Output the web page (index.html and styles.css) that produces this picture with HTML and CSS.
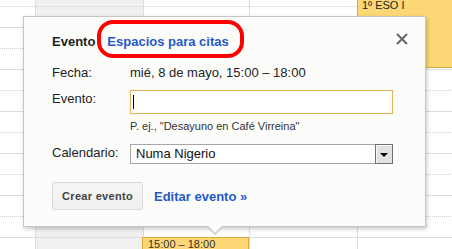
FILE: index.html
```html
<!DOCTYPE html>
<html lang="es">
<head>
<meta charset="utf-8">
<title>Evento</title>
<link rel="stylesheet" href="styles.css">
</head>
<body>
<div class="cal">
  <div class="col time"></div>
  <div class="col day today"></div>
  <div class="col day narrow"></div>
  <div class="col day"></div>
  <div class="col day last"></div>

  <div class="event ev-top">1º ESO I</div>
  <div class="event ev-bottom">15:00 – 18:00</div>

  <div class="popup">
    <div class="head">
      <span class="title">Evento</span>
      <a class="tab-link" href="#">Espacios para citas</a>
    </div>
    <button class="close" aria-label="Cerrar">
      <svg width="12" height="12" viewBox="0 0 12 12"><path d="M1 1 L11 11 M11 1 L1 11" stroke="#666" stroke-width="2" fill="none"/></svg>
    </button>
    <div class="form">
      <div class="label row-fecha">Fecha:</div>
      <div class="value row-fecha">mié, 8 de mayo, 15:00 – 18:00</div>

      <div class="label lbl-field row-evento">Evento:</div>
      <div class="field row-evento">
        <div class="input"><span class="caret"></span></div>
        <div class="hint">P. ej., "Desayuno en Café Virreina"</div>
      </div>

      <div class="label lbl-field row-cal">Calendario:</div>
      <div class="field row-cal">
        <div class="select">
          <span class="select-value">Numa Nigerio</span>
          <span class="select-btn"><span class="tri"></span></span>
        </div>
      </div>
    </div>
    <div class="actions">
      <button class="btn">Crear evento</button>
      <a class="edit-link" href="#">Editar evento »</a>
    </div>
    <div class="ring"></div>
  </div>
</div>
</body>
</html>
```
FILE: styles.css
```css
* { box-sizing: border-box; }
html, body { margin: 0; padding: 0; background: #fff; }
body { font-family: "Liberation Sans", Arial, sans-serif; color: #222; }

.cal {
  position: relative;
  display: flex;
  width: 452px;
  height: 249px;
  overflow: hidden;
}

.col {
  --dot: linear-gradient(to right, #cfcfcf 1px, transparent 1px);
  height: 100%;
  background:
    var(--dot) 0 6px / 2px 1px repeat-x,
    var(--dot) 0 48px / 2px 1px repeat-x,
    var(--dot) 0 90px / 2px 1px repeat-x,
    var(--dot) 0 132px / 2px 1px repeat-x,
    var(--dot) 0 174px / 2px 1px repeat-x,
    var(--dot) 0 216px / 2px 1px repeat-x,
    repeating-linear-gradient(to bottom, transparent 0 27px, #dddddd 27px 28px, transparent 28px 42px);
}
.time { width: 35px; flex: none; }
.day { width: 108px; flex: none; border-left: 1px solid #dddddd; }
.day.narrow { width: 106px; }
.day.last { flex: 1; }
.today { background-color: #f0f0f0; }

.event {
  position: absolute;
  background: #fbd776;
  border: 1px solid #d8aa3c;
  font-size: 11px;
  line-height: 13px;
  color: #222;
}
.ev-top {
  left: 357px;
  top: -3px;
  width: 100px;
  height: 71px;
  padding: 1px 4px 0;
}
.ev-bottom {
  left: 142px;
  top: 237px;
  width: 107px;
  height: 20px;
  padding: 0 5px;
  color: #333;
}

.popup {
  position: absolute;
  left: 23px;
  top: 16px;
  width: 403px;
  height: 211px;
  background: #fcfdfb;
  border: 1px solid #c6c6c6;
  box-shadow: 1px 2px 4px rgba(0, 0, 0, 0.22);
  padding: 15px 28px 0;
  font-size: 13px;
}
.popup::before,
.popup::after {
  content: "";
  position: absolute;
  width: 0;
  height: 0;
  border-style: solid;
  border-color: transparent;
  border-bottom-width: 0;
}
.popup::before {
  left: 182px;
  top: 209px;
  border-width: 9px 9px 0;
  border-top-color: #c6c6c6;
}
.popup::after {
  left: 183px;
  top: 208px;
  border-width: 8px 8px 0;
  border-top-color: #fcfdfb;
}

.head {
  display: flex;
  align-items: center;
  height: 20px;
  line-height: 20px;
}
.title { font-weight: bold; color: #222; }
.tab-link {
  margin-left: 12px;
  font-weight: bold;
  color: #2558cc;
  text-decoration: none;
}

.close {
  position: absolute;
  left: 372px;
  top: 16px;
  width: 12px;
  height: 12px;
  padding: 0;
  border: 0;
  background: none;
  display: flex;
}

.form {
  display: grid;
  grid-template-columns: 78px 263px;
  margin-top: 11px;
  align-items: start;
}
.label, .value { line-height: 20px; }
.lbl-field { line-height: 18px; }
.row-evento { margin-top: 7px; }
.row-cal { margin-top: 11px; }
.value { color: #222; }

.input {
  height: 24px;
  background: #fff;
  border: 1px solid #e5b45a;
  box-shadow: 0 0 1px rgba(229, 180, 90, 0.5);
  display: flex;
  align-items: center;
  padding-left: 2px;
}
.caret { width: 1px; height: 14px; background: #000; }
.hint {
  margin-top: 5px;
  font-size: 11px;
  line-height: 14px;
  color: #333;
}

.select {
  display: flex;
  height: 20px;
}
.select-value {
  flex: 1;
  border: 1px solid #a6a6a6;
  border-right: 0;
  background: #fff;
  padding-left: 5px;
  line-height: 18px;
  font-size: 13px;
  color: #111;
}
.select-btn {
  width: 18px;
  border: 1px solid #707070;
  background: #e2e2e2;
  box-shadow: inset 1px 1px #fafafa;
  display: flex;
  align-items: center;
  justify-content: center;
}
.tri {
  width: 0;
  height: 0;
  border-left: 4px solid transparent;
  border-right: 4px solid transparent;
  border-top: 4px solid #000;
  margin-top: 1px;
}

.actions {
  display: flex;
  align-items: center;
  margin-top: 18px;
}
.btn {
  height: 28px;
  width: 91px;
  padding: 0;
  border: 1px solid #dadada;
  border-radius: 2px;
  background: linear-gradient(#f5f5f5, #f0f0f0);
  font-family: "Liberation Sans", Arial, sans-serif;
  font-size: 11px;
  font-weight: bold;
  color: #444;
  letter-spacing: 0.3px;
}
.edit-link {
  margin-left: 11px;
  font-weight: bold;
  color: #2558cc;
  text-decoration: none;
}

.ring {
  position: absolute;
  left: 73px;
  top: 3px;
  width: 147px;
  height: 38px;
  border: 4px solid #ff0000;
  border-radius: 16px;
}
```
